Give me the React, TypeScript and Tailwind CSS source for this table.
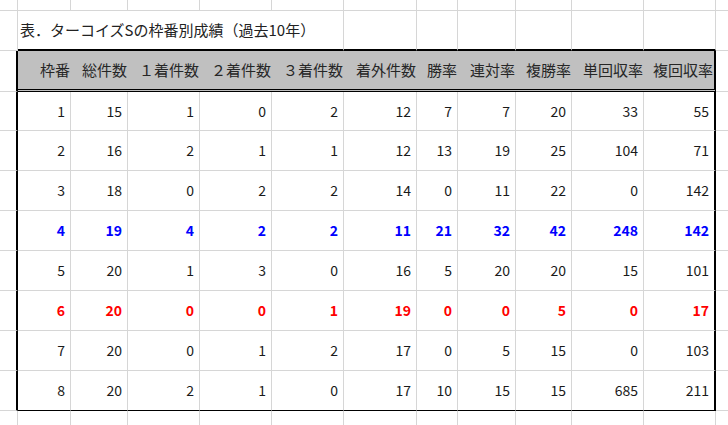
import React from "react";

const G = "border-[#d6d6d6]";

const headers = ["枠番", "総件数", "１着件数", "２着件数", "３着件数", "着外件数", "勝率", "連対率", "複勝率", "単回収率", "複回収率"];

const rows: { v: number[]; tone?: "blue" | "red" }[] = [
  { v: [1, 15, 1, 0, 2, 12, 7, 7, 20, 33, 55] },
  { v: [2, 16, 2, 1, 1, 12, 13, 19, 25, 104, 71] },
  { v: [3, 18, 0, 2, 2, 14, 0, 11, 22, 0, 142] },
  { v: [4, 19, 4, 2, 2, 11, 21, 32, 42, 248, 142], tone: "blue" },
  { v: [5, 20, 1, 3, 0, 16, 5, 20, 20, 15, 101] },
  { v: [6, 20, 0, 0, 1, 19, 0, 0, 5, 0, 17], tone: "red" },
  { v: [7, 20, 0, 1, 2, 17, 0, 5, 15, 0, 103] },
  { v: [8, 20, 2, 1, 0, 17, 10, 15, 15, 685, 211] },
];

const font = { fontFamily: '"Noto Sans CJK JP", "Noto Sans", sans-serif' };

export default function App() {
  const cols = 13;
  return (
    <div
      className="w-[728px] h-[425px] overflow-hidden bg-white grid grid-cols-[18px_53px_57px_72px_72px_72px_73px_41px_58px_56px_72px_72px_1fr] grid-rows-[11px_40px_41px_39px_repeat(7,40px)_1fr] text-[#1a1a1a]"
      style={font}
    >
      {/* top partial row */}
      {Array.from({ length: cols }).map((_, i) => (
        <div key={"t" + i} className={`border-b ${i < 12 ? "border-r" : ""} ${G}`} />
      ))}

      {/* title row */}
      <div className={`border-r border-b ${G}`} />
      <div className={`col-span-5 border-r ${G} border-b-2 border-b-black flex items-center pl-[2px] whitespace-nowrap text-[15px] text-[#222]`}>
        表．ターコイズSの枠番別成績（過去10年）
      </div>
      {Array.from({ length: 6 }).map((_, i) => (
        <div key={"tt" + i} className={`border-r ${G} border-b-2 border-b-black`} />
      ))}
      <div className={`border-b ${G}`} />

      {/* header row */}
      <div className={`border-b ${G} border-r-2 border-r-black`} />
      {headers.map((h, i) => (
        <div
          key={h}
          className={`bg-[#c0c0c0] border-b-[3px] border-double border-b-black flex items-center justify-end pr-px text-[15px] text-[#262626] whitespace-nowrap ${
            i === 10 ? "border-r-2 border-r-black" : ""
          }`}
        >
          {h}
        </div>
      ))}
      <div className={`border-b ${G}`} />

      {/* data rows */}
      {rows.map((r, ri) => {
        const last = ri === rows.length - 1;
        const tone =
          r.tone === "blue"
            ? "text-[#0000ff] font-bold"
            : r.tone === "red"
            ? "text-[#ff0000] font-bold"
            : "";
        return (
          <React.Fragment key={"r" + ri}>
            <div className={`border-b ${G} border-r-2 border-r-black`} />
            {r.v.map((n, ci) => (
              <div
                key={ci}
                className={`flex items-center justify-end pr-[5px] text-[14px] ${tone} ${
                  last ? "border-b border-b-black" : `border-b ${G}`
                } ${ci === 10 ? "border-r-2 border-r-black" : `border-r ${G}`}`}
              >
                {n}
              </div>
            ))}
            <div className={`border-b ${G}`} />
          </React.Fragment>
        );
      })}

      {/* bottom partial row */}
      {Array.from({ length: cols }).map((_, i) => (
        <div key={"b" + i} className={`${i < 12 ? "border-r" : ""} ${G}`} />
      ))}
    </div>
  );
}
